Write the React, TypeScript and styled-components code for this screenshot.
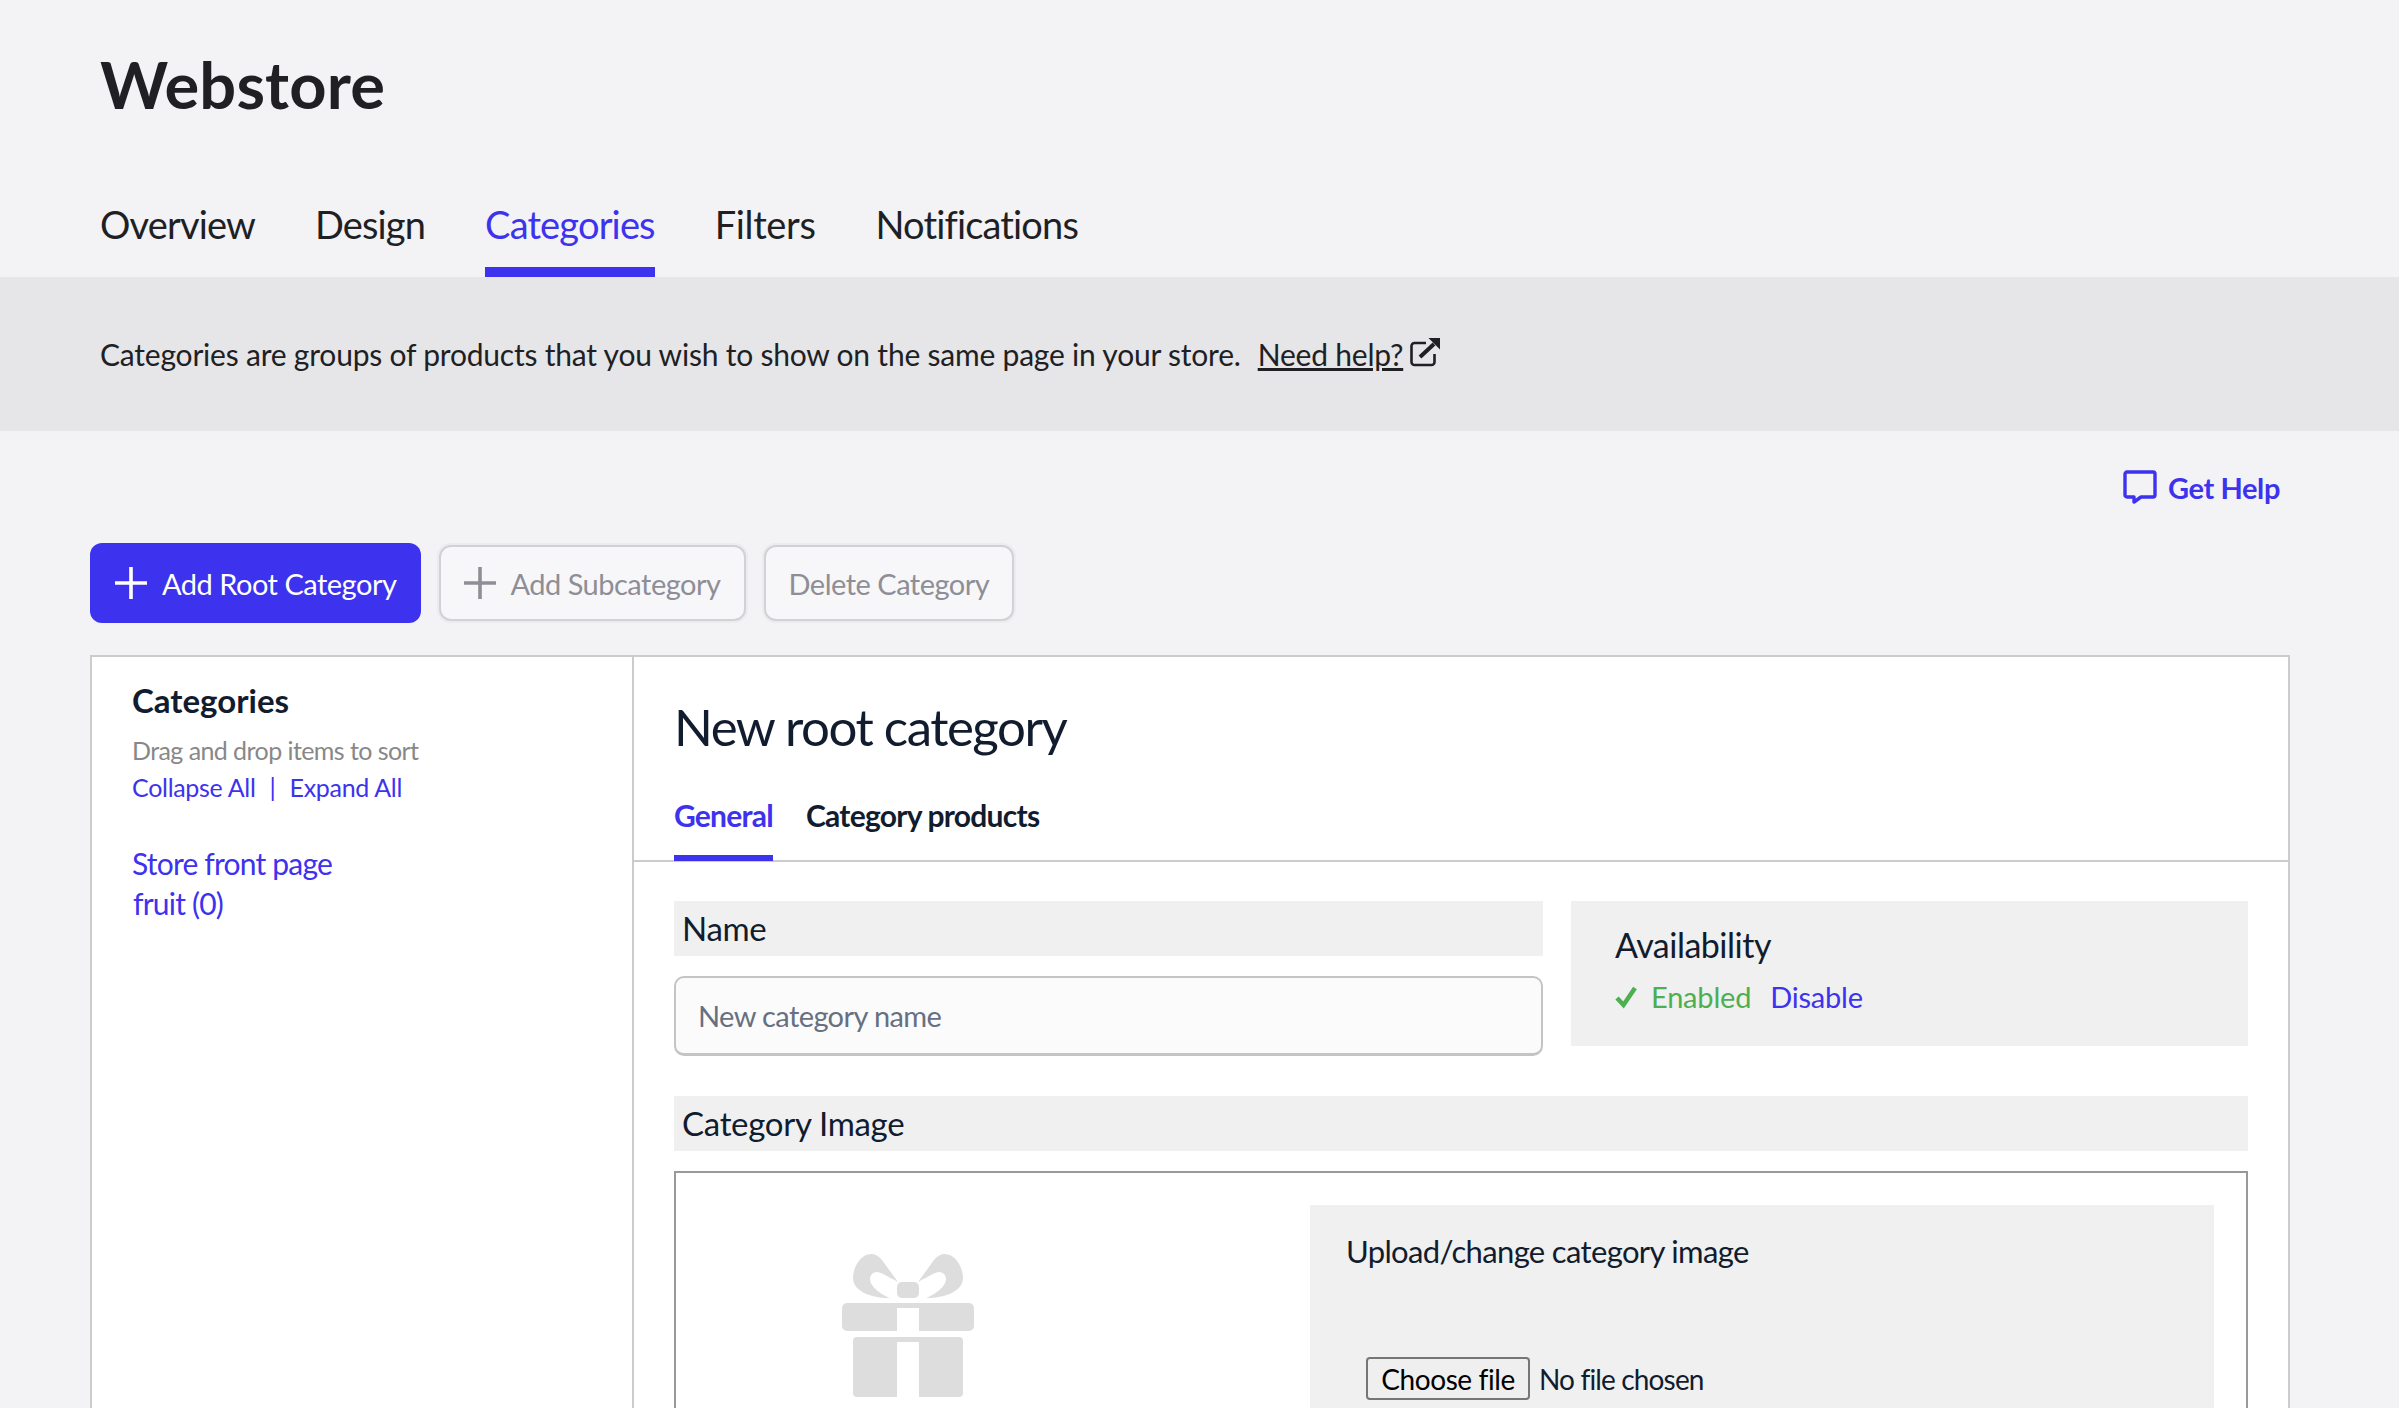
import styled, { createGlobalStyle } from 'styled-components';

const BLUE = '#3d32ee';
const NAVY = '#111c2e';

const GlobalStyle = createGlobalStyle`
  html, body {
    margin: 0;
    padding: 0;
    background: #f3f2f5;
    font-family: Lato, "Open Sans", sans-serif;
  }
  * {
    box-sizing: border-box;
  }
`;

const Page = styled.div`
  height: 100vh;
  overflow: hidden;
  color: #201f24;
`;

const Header = styled.header`
  height: 277px;
  padding: 41px 100px 0;
  display: flex;
  flex-direction: column;
`;

const PageTitle = styled.h1`
  margin: 0;
  font-size: 65px;
  line-height: 86px;
  font-weight: 700;
  letter-spacing: 0.15px;
`;

const NavTabs = styled.nav`
  display: flex;
  gap: 60px;
  margin-top: auto;
`;

const NavTab = styled.a<{ $active?: boolean; $loose?: boolean }>`
  height: 80px;
  line-height: 54px;
  font-size: 38px;
  letter-spacing: ${(p) => (p.$loose ? '-0.35px' : '-0.85px')};
  color: ${(p) => (p.$active ? BLUE : '#201f24')};
  border-bottom: 10px solid ${(p) => (p.$active ? BLUE : 'transparent')};
`;

const Banner = styled.div`
  height: 154px;
  padding: 0 100px;
  background: #e6e5e8;
  display: flex;
  align-items: center;
  font-size: 30px;
  letter-spacing: -0.21px;
`;

const BannerLink = styled.a`
  margin-left: 17px;
  color: #201f24;
  text-decoration: underline;
`;

const ExternalIcon = styled.svg`
  width: 32px;
  height: 32px;
  margin: -3px 0 0 6px;
`;

const HelpRow = styled.div`
  height: 112px;
  padding: 39px 119px 0 0;
  display: flex;
  justify-content: flex-end;
`;

const HelpLink = styled.a`
  display: flex;
  align-items: flex-start;
  gap: 11px;
  height: 36px;
  font-size: 29px;
  line-height: 36px;
  font-weight: 700;
  letter-spacing: -0.4px;
  color: ${BLUE};
`;

const Toolbar = styled.div`
  height: 112px;
  padding-left: 90px;
  display: flex;
  align-items: flex-start;
  gap: 18px;
`;

const ActionButton = styled.button<{ $primary?: boolean }>`
  display: flex;
  align-items: center;
  gap: ${(p) => (p.$primary ? '15px' : '14px')};
  height: ${(p) => (p.$primary ? '80px' : '76px')};
  margin-top: ${(p) => (p.$primary ? '0' : '2px')};
  padding: 0 ${(p) => (p.$primary ? '25px' : '23px')};
  font-family: inherit;
  font-size: 29px;
  letter-spacing: -0.5px;
  border-radius: 12px;
  color: ${(p) => (p.$primary ? '#fff' : '#8e8e96')};
  background: ${(p) => (p.$primary ? BLUE : '#f7f7f9')};
  border: ${(p) => (p.$primary ? '0' : '2px solid #d2d1d6')};
  box-shadow: ${(p) => (p.$primary ? 'none' : '0 0 0 2px #ecebee')};
`;

const Panel = styled.div`
  width: 2200px;
  margin-left: 90px;
  min-height: 900px;
  display: grid;
  grid-template-columns: 542px 1fr;
  background: #fff;
  border: 2px solid #cccccc;
  color: ${NAVY};
`;

const Sidebar = styled.aside`
  padding: 20px 40px;
  border-right: 2px solid #cccccc;
`;

const SidebarTitle = styled.h3`
  margin: 0;
  font-size: 33px;
  line-height: 46px;
  font-weight: 700;
`;

const SidebarHint = styled.div`
  margin-top: 9px;
  font-size: 25px;
  line-height: 36px;
  letter-spacing: -0.57px;
  color: #888888;
`;

const SidebarLinks = styled.div`
  font-size: 25px;
  line-height: 38px;
  letter-spacing: -0.3px;
  color: ${BLUE};
`;

const Separator = styled.span`
  margin: 0 14px;
`;

const TreeList = styled.ul`
  margin: 37px 0 0;
  padding: 0;
  list-style: none;
  font-size: 30px;
  line-height: 40px;
  letter-spacing: -0.8px;
  color: ${BLUE};
`;

const TreeItem = styled.li<{ $nested?: boolean }>`
  padding-left: ${(p) => (p.$nested ? '1px' : '0')};
`;

const Main = styled.main`
  min-width: 0;
`;

const MainHead = styled.div`
  height: 205px;
  padding: 39px 40px 0;
  display: flex;
  flex-direction: column;
  border-bottom: 2px solid #cccccc;
`;

const MainTitle = styled.h2`
  margin: 0;
  font-size: 51px;
  line-height: 62px;
  font-weight: 400;
  letter-spacing: -1.48px;
`;

const SubTabs = styled.div`
  margin-top: auto;
  display: flex;
  gap: 33px;
`;

const SubTab = styled.a<{ $active?: boolean }>`
  height: 64px;
  margin-bottom: -1px;
  font-size: 30px;
  line-height: 36px;
  font-weight: 700;
  letter-spacing: -0.75px;
  color: ${(p) => (p.$active ? BLUE : NAVY)};
  border-bottom: 6px solid ${(p) => (p.$active ? BLUE : 'transparent')};
`;

const Form = styled.div`
  padding: 39px 40px 0;
`;

const TopFields = styled.div`
  display: grid;
  grid-template-columns: 869px 677px;
  gap: 28px;
`;

const FieldBar = styled.div`
  height: 55px;
  padding-left: 8px;
  font-size: 33px;
  line-height: 55px;
  letter-spacing: -0.3px;
  background: #f0f0f0;
`;

const TextInput = styled.input`
  display: block;
  width: 100%;
  height: 80px;
  margin-top: 20px;
  padding: 0 22px;
  font-family: inherit;
  font-size: 29px;
  letter-spacing: -0.6px;
  color: ${NAVY};
  background: #fbfbfb;
  border: 2px solid #c4c4c4;
  border-bottom-width: 3px;
  border-radius: 10px;

  &::placeholder {
    color: #667080;
    opacity: 1;
  }
`;

const AvailabilityBox = styled.div`
  height: 145px;
  padding: 24px 44px;
  background: #f0f0f0;
`;

const AvailabilityTitle = styled.div`
  font-size: 34px;
  line-height: 40px;
  letter-spacing: -0.5px;
`;

const AvailabilityRow = styled.div`
  display: flex;
  align-items: center;
  margin-top: 10px;
  font-size: 29px;
  line-height: 44px;
  letter-spacing: -0.2px;
`;

const Enabled = styled.span`
  margin-left: 14px;
  color: #4caf50;
`;

const DisableLink = styled.a`
  margin-left: 19px;
  color: ${BLUE};
`;

const ImageSection = styled.section`
  margin-top: 40px;
`;

const ImageBox = styled.div`
  width: 1574px;
  height: 400px;
  margin-top: 20px;
  padding: 32px 32px 0 166px;
  display: flex;
  justify-content: space-between;
  border: 2px solid #999999;
`;

const GiftIcon = styled.svg`
  width: 132px;
  height: 143px;
  margin-top: 49px;
  flex: none;
`;

const UploadBox = styled.div`
  width: 904px;
  padding: 28px 36px;
  background: #f0f0f0;
`;

const UploadTitle = styled.div`
  font-size: 31px;
  line-height: 36px;
  letter-spacing: -0.65px;
`;

const FileRow = styled.div`
  display: flex;
  align-items: center;
  gap: 9px;
  margin: 88px 0 0 20px;
  font-size: 28px;
  letter-spacing: -0.85px;
`;

const FileButton = styled.button`
  width: 164px;
  height: 43px;
  padding: 0;
  font-family: inherit;
  font-size: 28px;
  letter-spacing: -0.4px;
  color: #000;
  background: #efefef;
  border: 2px solid #767676;
  border-radius: 4px;
`;

function Plus({ color }: { color: string }) {
  return (
    <svg width="32" height="32" viewBox="0 0 32 32">
      <path d="M16 0v32M0 16h32" stroke={color} strokeWidth="3.6" strokeLinecap="round" />
    </svg>
  );
}

export default function App() {
  return (
    <Page>
      <GlobalStyle />
      <Header>
        <PageTitle>Webstore</PageTitle>
        <NavTabs>
          <NavTab>Overview</NavTab>
          <NavTab>Design</NavTab>
          <NavTab $active>Categories</NavTab>
          <NavTab $loose>Filters</NavTab>
          <NavTab>Notifications</NavTab>
        </NavTabs>
      </Header>
      <Banner>
        Categories are groups of products that you wish to show on the same page in your store.
        <BannerLink>Need help?</BannerLink>
        <ExternalIcon viewBox="0 0 32 32" fill="none">
          <path d="M17 6H5.5A3 3 0 0 0 2.500 9v16a3 3 0 0 0 3 3h17a3 3 0 0 0 3-3v-8" stroke="#201f24" strokeWidth="2.600" />
          <path d="M11 20 25 7" stroke="#201f24" strokeWidth="4" />
          <path d="M19.500 1H31v11.500z" fill="#201f24" />
        </ExternalIcon>
      </Banner>
      <HelpRow>
        <HelpLink>
          <svg width="34" height="34" viewBox="0 0 34 34" fill="none">
            <path
              d="M4 2h26a2 2 0 0 1 2 2v21a2 2 0 0 1-2 2H18l-7 5v-5H4a2 2 0 0 1-2-2V4a2 2 0 0 1 2-2z"
              stroke={BLUE}
              strokeWidth="3.400"
              strokeLinejoin="round"
            />
          </svg>
          Get Help
        </HelpLink>
      </HelpRow>
      <Toolbar>
        <ActionButton $primary>
          <Plus color="#fff" />
          Add Root Category
        </ActionButton>
        <ActionButton>
          <Plus color="#8e8e96" />
          Add Subcategory
        </ActionButton>
        <ActionButton>Delete Category</ActionButton>
      </Toolbar>
      <Panel>
        <Sidebar>
          <SidebarTitle>Categories</SidebarTitle>
          <SidebarHint>Drag and drop items to sort</SidebarHint>
          <SidebarLinks>
            Collapse All<Separator>|</Separator>Expand All
          </SidebarLinks>
          <TreeList>
            <TreeItem>Store front page</TreeItem>
            <TreeItem $nested>fruit (0)</TreeItem>
          </TreeList>
        </Sidebar>
        <Main>
          <MainHead>
            <MainTitle>New root category</MainTitle>
            <SubTabs>
              <SubTab $active>General</SubTab>
              <SubTab>Category products</SubTab>
            </SubTabs>
          </MainHead>
          <Form>
            <TopFields>
              <div>
                <FieldBar>Name</FieldBar>
                <TextInput placeholder="New category name" />
              </div>
              <AvailabilityBox>
                <AvailabilityTitle>Availability</AvailabilityTitle>
                <AvailabilityRow>
                  <svg width="22" height="24" viewBox="0 0 22 24" fill="none">
                    <path d="M2 13l6.500 7L20 3" stroke="#4caf50" strokeWidth="4.500" />
                  </svg>
                  <Enabled>Enabled</Enabled>
                  <DisableLink>Disable</DisableLink>
                </AvailabilityRow>
              </AvailabilityBox>
            </TopFields>
            <ImageSection>
              <FieldBar>Category Image</FieldBar>
              <ImageBox>
                <GiftIcon viewBox="0 0 132 143" fill="#dddddd">
                  <path d="M56 28 40 6C36 1 32 0 29 0 19 0 11 13 11 24c0 12 15 20 37 20-8-3-20-11-20-19 0-4 3-7 7-7 3 0 10 4 21 10z" />
                  <path d="M76 28 92 6c4-5 8-6 11-6 10 0 18 13 18 24 0 12-15 20-37 20 8-3 20-11 20-19 0-4-3-7-7-7-3 0-10 4-21 10z" />
                  <rect x="55" y="28" width="22" height="16" rx="5" />
                  <path d="M5 49h122a5 5 0 0 1 5 5v18a5 5 0 0 1-5 5H77V54H55v23H5a5 5 0 0 1-5-5V54a5 5 0 0 1 5-5z" />
                  <path d="M15 83h102a4 4 0 0 1 4 4v52a4 4 0 0 1-4 4H77V88H55v55H15a4 4 0 0 1-4-4V87a4 4 0 0 1 4-4z" />
                </GiftIcon>
                <UploadBox>
                  <UploadTitle>Upload/change category image</UploadTitle>
                  <FileRow>
                    <FileButton>Choose file</FileButton>
                    <span>No file chosen</span>
                  </FileRow>
                </UploadBox>
              </ImageBox>
            </ImageSection>
          </Form>
        </Main>
      </Panel>
    </Page>
  );
}
